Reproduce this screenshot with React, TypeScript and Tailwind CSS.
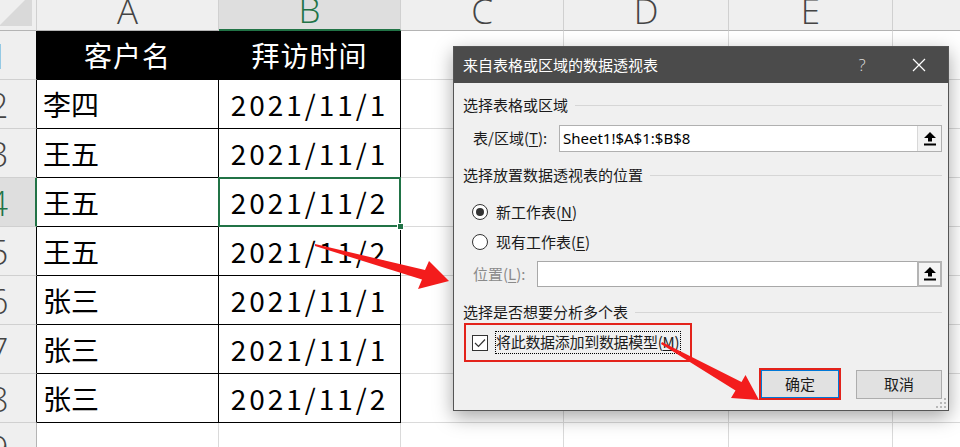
import React from "react";

const data: [string, string][] = [
  ["客户名", "拜访时间"],
  ["李四", "2021/11/1"],
  ["王五", "2021/11/1"],
  ["王五", "2021/11/2"],
  ["王五", "2021/11/2"],
  ["张三", "2021/11/1"],
  ["张三", "2021/11/1"],
  ["张三", "2021/11/2"],
];
const letters = ["", "A", "B", "C", "D", "E", "F"];

function Cell({ r, c }: { r: number; c: number }) {
  // header row
  if (r === 0) {
    if (c === 0) {
      return (
        <div className="relative bg-[#efefef] border-r border-b border-r-[#d0d0d0] border-b-[#b4b4b4]">
          <svg className="absolute right-[4px] bottom-[4px]" width="33" height="33" viewBox="0 0 33 33">
            <polygon points="33,0 33,33 0,33" fill="#d9d9d9" />
          </svg>
        </div>
      );
    }
    if (c === 2) {
      return (
        <div className="bg-[#dedede] border-r border-r-[#d0d0d0] border-b-2 border-b-[#217346] flex items-center justify-center pt-[7px] text-[35px] leading-none font-['Open_Sans',sans-serif] font-light text-[#217346]">
          {letters[c]}
        </div>
      );
    }
    return (
      <div className="bg-[#efefef] border-r border-b border-r-[#d0d0d0] border-b-[#b4b4b4] flex items-center justify-center pt-[7px] text-[35px] leading-none font-['Open_Sans',sans-serif] font-light text-[#444444]">
        {letters[c]}
      </div>
    );
  }
  // row header
  if (c === 0) {
    if (r === 4) {
      return (
        <div className="bg-[#dedede] border-b border-b-[#d0d0d0] border-r-2 border-r-[#217346] flex items-center justify-center text-[35px] leading-none font-['Open_Sans',sans-serif] font-light text-[#217346]">
          {r}
        </div>
      );
    }
    return (
      <div
        className={
          r <= 8
            ? "bg-[#efefef] border-b border-r border-b-[#d0d0d0] border-r-[#000000] flex items-center justify-center text-[35px] leading-none font-['Open_Sans',sans-serif] font-light text-[#444444]"
            : "bg-[#efefef] border-b border-r border-b-[#d0d0d0] border-r-[#b4b4b4] flex items-center justify-center text-[35px] leading-none font-['Open_Sans',sans-serif] font-light text-[#444444]"
        }
      >
        {r}
      </div>
    );
  }
  // table data
  if (r <= 8 && c <= 2) {
    const text = data[r - 1][c - 1];
    if (r === 1) {
      return (
        <div className="bg-black border-r border-b border-black flex items-center justify-center text-white text-[28px] font-['Noto_Sans_CJK_SC',sans-serif] tracking-[1px]">
          {text}
        </div>
      );
    }
    if (c === 1) {
      return (
        <div className="bg-white border-r border-b border-black flex items-center pl-[6px] text-black text-[28px] font-['Noto_Sans_CJK_SC',sans-serif]">
          {text}
        </div>
      );
    }
    return (
      <div className="relative bg-white border-r border-b border-black flex items-center justify-center text-black text-[28px] font-['Noto_Sans_CJK_SC',sans-serif] tracking-[3px]">
        {text}
        {r === 4 && (
          <>
            <div className="absolute -top-[1px] -left-[1px] -right-[1px] -bottom-[1px] border-2 border-[#217346] z-10" />
            <div className="absolute -right-[4px] -bottom-[4px] w-[7px] h-[7px] bg-[#217346] border border-white z-10" />
          </>
        )}
      </div>
    );
  }
  return <div className="bg-white border-r border-b border-[#dadada]" />;
}

function UploadIcon() {
  return (
    <svg width="12" height="14" viewBox="0 0 12 14">
      <path d="M6 0 L12 6 L8 6 L8 9.5 L4 9.5 L4 6 L0 6 Z" fill="#000" />
      <rect x="0" y="11.5" width="12" height="2" fill="#000" />
    </svg>
  );
}

function Section({ children, className }: { children: React.ReactNode; className: string }) {
  return (
    <div className={className}>
      <span>{children}</span>
      <div className="flex-1 h-px bg-[#d6d6d6] ml-[7px]" />
    </div>
  );
}

function Radio({ checked }: { checked: boolean }) {
  return (
    <div className="w-[16px] h-[16px] rounded-full border border-[#333] bg-white flex items-center justify-center shrink-0">
      {checked && <div className="w-[8px] h-[8px] rounded-full bg-[#333]" />}
    </div>
  );
}

function Dialog() {
  return (
    <div className="absolute left-[453px] top-[46px] w-[496px] h-[365px] border border-[#555555] bg-[#f0f0f0] shadow-[0_6px_18px_rgba(0,0,0,0.35)] flex flex-col text-[15px] text-[#1b1b1b] font-['Noto_Sans_CJK_SC',sans-serif] z-20">
      <div className="h-[36px] bg-[#4b4b4b] flex items-center pl-[9px] text-white shrink-0">
        <span className="flex-1">来自表格或区域的数据透视表</span>
        <span className="w-[20px] text-center text-[#dcdcdc] font-['Open_Sans',sans-serif] text-[17px] font-light">?</span>
        <div className="w-[30px] ml-[32px] mr-[14px] flex items-center justify-center">
          <svg width="14" height="14" viewBox="0 0 14 14">
            <path d="M1 1 L13 13 M13 1 L1 13" stroke="#ffffff" strokeWidth="1.2" />
          </svg>
        </div>
      </div>
      <div className="flex flex-col pl-[9px] pr-[6px]">
        <Section className="mt-[10px] h-[24px] flex items-center">选择表格或区域</Section>
        <div className="mt-[8px] h-[27px] flex items-center">
          <div className="w-[96px] pl-[10px]">
            表/区域(<span className="underline underline-offset-2">T</span>):
          </div>
          <div className="flex-1 h-[27px] flex border border-[#b0b0b0] bg-white">
            <div className="flex-1 flex items-center pl-[3px] font-['Noto_Sans',sans-serif] text-[15px] text-black">
              Sheet1!$A$1:$B$8
            </div>
            <div className="w-[24px] flex items-center justify-center bg-[#f3f3f3] border-l border-[#d8d8d8]">
              <UploadIcon />
            </div>
          </div>
        </div>
        <Section className="mt-[11px] h-[24px] flex items-center">选择放置数据透视表的位置</Section>
        <div className="mt-[13px] h-[24px] flex items-center pl-[9px] gap-[8px]">
          <Radio checked={true} />
          <span>
            新工作表(<span className="underline underline-offset-2">N</span>)
          </span>
        </div>
        <div className="mt-[6px] h-[24px] flex items-center pl-[9px] gap-[8px]">
          <Radio checked={false} />
          <span>
            现有工作表(<span className="underline underline-offset-2">E</span>)
          </span>
        </div>
        <div className="mt-[7px] h-[26px] flex items-center">
          <div className="w-[74px] pl-[10px] text-[#8a8a8a]">
            位置(<span className="underline underline-offset-2">L</span>):
          </div>
          <div className="flex-1 h-[26px] flex border border-[#a8a8a8] bg-white">
            <div className="flex-1" />
            <div className="w-[25px] -my-px -mr-px flex items-center justify-center bg-[#f4f4f4] border-2 border-[#b4b4b4]">
              <UploadIcon />
            </div>
          </div>
        </div>
        <Section className="mt-[14px] h-[22px] flex items-center">选择是否想要分析多个表</Section>
        <div className="ml-[1px] w-[228px] h-[39px] border-2 border-[#e3231b] flex items-center pl-[6px] gap-[7px]">
          <div className="w-[16px] h-[16px] border border-[#333] bg-white flex items-center justify-center shrink-0">
            <svg width="12" height="10" viewBox="0 0 12 10">
              <path d="M1 5 L4.5 8.5 L11 1.5" stroke="#333" strokeWidth="1.2" fill="none" />
            </svg>
          </div>
          <div className="h-[23px] flex items-center border border-dotted border-black pr-[1px] whitespace-nowrap tracking-[-0.3px]">
            将此数据添加到数据模型(<span className="underline underline-offset-2">M</span>)
          </div>
        </div>
        <div className="mt-[6px] h-[32px] flex items-center justify-end gap-[15px]">
          <div className="w-[82px] h-[32px] border-2 border-[#e3231b] flex">
            <div className="flex-1 bg-[#e1e1e1] border border-[#0078d7] flex items-center justify-center">确定</div>
          </div>
          <div className="w-[86px] h-[29px] bg-[#e1e1e1] border border-[#adadad] flex items-center justify-center">取消</div>
        </div>
      </div>
      <svg className="absolute right-[1px] bottom-[1px]" width="11" height="11" viewBox="0 0 11 11">
        <rect x="8" y="0" width="2" height="2" fill="#b8b8b8" />
        <rect x="4" y="4" width="2" height="2" fill="#b8b8b8" />
        <rect x="8" y="4" width="2" height="2" fill="#b8b8b8" />
        <rect x="0" y="8" width="2" height="2" fill="#b8b8b8" />
        <rect x="4" y="8" width="2" height="2" fill="#b8b8b8" />
        <rect x="8" y="8" width="2" height="2" fill="#b8b8b8" />
      </svg>
    </div>
  );
}

function Arrows() {
  return (
    <svg className="absolute inset-0 pointer-events-none z-30" width="960" height="447" viewBox="0 0 960 447">
      <polygon points="315,244 425,270 429,261 449,281 418,289 422,279.5 315,246" fill="#f31c1c" />
      <polygon points="662,342 741.5,382 745.5,375 759,400 731,398 735.5,390.5 661,344" fill="#f31c1c" />
    </svg>
  );
}

export default function App() {
  const cells: React.ReactNode[] = [];
  for (let r = 0; r < 10; r++) {
    for (let c = 0; c < 7; c++) {
      cells.push(<Cell key={`${r}-${c}`} r={r} c={c} />);
    }
  }
  return (
    <div className="relative w-[960px] h-[447px] overflow-hidden bg-white">
      <div className="-ml-[39px] -mt-[17px]">
        <div className="grid w-max grid-cols-[76px_182px_182px_163px_165px_164px_180px] grid-rows-[48px_repeat(9,49px)]">
          {cells}
        </div>
      </div>
      <Dialog />
      <Arrows />
    </div>
  );
}
